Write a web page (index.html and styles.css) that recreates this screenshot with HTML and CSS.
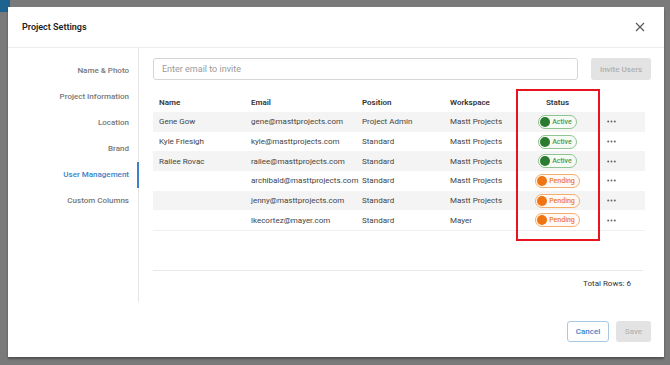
FILE: index.html
```html
<!DOCTYPE html>
<html lang="en">
<head>
    <meta charset="UTF-8">
    <meta name="viewport" content="width=device-width, initial-scale=1.0">
    <title>Project Settings</title>
    <link rel="stylesheet" href="styles.css">
</head>
<body>
    <div class="page-corner"></div>

    <div class="modal">
        <div class="modal-header">
            <h1>Project Settings</h1>
            <button class="close-btn" aria-label="Close">
                <svg width="10" height="10" viewBox="0 0 10 10">
                    <path d="M1 1 L9 9 M9 1 L1 9" stroke="#555" stroke-width="1.1" fill="none"/>
                </svg>
            </button>
        </div>

        <div class="modal-body">
            <nav class="side-nav">
                <div class="nav-item">Name &amp; Photo</div>
                <div class="nav-item">Project Information</div>
                <div class="nav-item">Location</div>
                <div class="nav-item">Brand</div>
                <div class="nav-item active">User Management</div>
                <div class="nav-item">Custom Columns</div>
            </nav>

            <section class="content">
                <div class="invite-row">
                    <input type="text" class="invite-input" placeholder="Enter email to invite">
                    <button class="invite-btn" disabled>Invite Users</button>
                </div>

                <div class="table-wrap">
                    <table class="users-table">
                        <thead>
                            <tr>
                                <th class="col-name">Name</th>
                                <th class="col-email">Email</th>
                                <th class="col-position">Position</th>
                                <th class="col-workspace">Workspace</th>
                                <th class="col-status">Status</th>
                                <th class="col-actions"></th>
                            </tr>
                        </thead>
                        <tbody id="user-rows"></tbody>
                    </table>
                    <div class="highlight-box"></div>
                </div>

                <div class="table-footer">Total Rows: 6</div>
            </section>
        </div>

        <div class="modal-footer">
            <button class="btn-cancel">Cancel</button>
            <button class="btn-save" disabled>Save</button>
        </div>
    </div>

    <script>
        // Table data
        const users = [
            { name: 'Gene Gow', email: 'gene@masttprojects.com', position: 'Project Admin', workspace: 'Mastt Projects', status: 'Active' },
            { name: 'Kyle Friesigh', email: 'kyle@masttprojects.com', position: 'Standard', workspace: 'Mastt Projects', status: 'Active' },
            { name: 'Railee Rovac', email: 'railee@masttprojects.com', position: 'Standard', workspace: 'Mastt Projects', status: 'Active' },
            { name: '', email: 'archibald@masttprojects.com', position: 'Standard', workspace: 'Mastt Projects', status: 'Pending' },
            { name: '', email: 'jenny@masttprojects.com', position: 'Standard', workspace: 'Mastt Projects', status: 'Pending' },
            { name: '', email: 'lkecortez@mayer.com', position: 'Standard', workspace: 'Mayer', status: 'Pending' }
        ];

        const tbody = document.getElementById('user-rows');
        const dots = '<svg width="9" height="3" viewBox="0 0 9 3"><circle cx="1.2" cy="1.5" r="1" fill="#666"/><circle cx="4.5" cy="1.5" r="1" fill="#666"/><circle cx="7.8" cy="1.5" r="1" fill="#666"/></svg>';

        users.forEach(u => {
            const tr = document.createElement('tr');
            const cls = u.status.toLowerCase();
            tr.innerHTML = `
                <td>${u.name}</td>
                <td>${u.email}</td>
                <td>${u.position}</td>
                <td>${u.workspace}</td>
                <td class="status-cell"><span class="badge ${cls}"><span class="dot"></span>${u.status}</span></td>
                <td class="actions-cell">${dots}</td>`;
            tbody.appendChild(tr);
        });
    </script>
</body>
</html>
```

FILE: styles.css
```css
* {
    box-sizing: border-box;
}

html, body {
    height: 100%;
    margin: 0;
    padding: 0;
    font-family: Roboto, 'Liberation Sans', sans-serif;
    background-color: #7a7a7a;
}

body {
    padding: 7px 6px 8px 8px;
    position: relative;
}

.page-corner {
    position: absolute;
    left: 0;
    top: 0;
    width: 10px;
    height: 12px;
    background-color: #1d6390;
}

.modal {
    position: relative;
    height: 350px;
    background-color: white;
    display: flex;
    flex-direction: column;
    box-shadow: 0 2px 2px rgba(0, 0, 0, 0.35);
}

.modal-header {
    height: 41px;
    padding: 0 14px;
    display: flex;
    align-items: center;
    justify-content: space-between;
    border-bottom: 1px solid #ececec;
}

.modal-header h1 {
    margin: 0;
    font-size: 9px;
    font-weight: 600;
    color: #222;
}

.close-btn {
    border: none;
    background: none;
    padding: 0;
    margin-right: 5px;
    display: flex;
    cursor: pointer;
}

.modal-body {
    display: flex;
    height: 254px;
}

.side-nav {
    width: 131px;
    padding-top: 10px;
    border-right: 1px solid #e6e6e6;
}

.nav-item {
    height: 26px;
    line-height: 26px;
    text-align: right;
    padding-right: 9px;
    font-size: 8px;
    font-weight: 500;
    color: #777;
}

.nav-item.active {
    color: #3d82c6;
    margin-right: -1px;
    border-right: 2px solid #3d82c6;
    padding-right: 8px;
}

.content {
    flex: 1;
    padding: 10px 13px 0 14px;
}

.invite-row {
    display: flex;
    gap: 13px;
}

.invite-input {
    flex: 1;
    height: 22px;
    padding: 0 8px;
    border: 1px solid #d6d6d6;
    border-radius: 3px;
    font-family: inherit;
    font-size: 9px;
    outline: none;
}

.invite-input::placeholder {
    color: #9a9a9a;
}

.invite-btn {
    width: 60px;
    height: 22px;
    border: none;
    border-radius: 3px;
    background-color: #e3e3e3;
    color: #b0b0b0;
    font-family: inherit;
    font-size: 8px;
    font-weight: 500;
}

.table-wrap {
    position: relative;
    margin-top: 13px;
    width: 492px;
}

.users-table {
    width: 100%;
    border-collapse: collapse;
    table-layout: fixed;
    font-size: 8px;
    color: #444;
}

.users-table th {
    height: 19px;
    text-align: left;
    padding: 0 6px;
    font-weight: 600;
    color: #333;
}

.users-table td {
    height: 19.7px;
    padding: 0 6px;
    white-space: nowrap;
}

.users-table tbody tr:nth-child(odd) {
    background-color: #f4f4f4;
}

.users-table tbody tr:last-child {
    border-bottom: 1px solid #f0f0f0;
}

.col-name { width: 92px; }
.col-email { width: 111px; }
.col-position { width: 88px; }
.col-workspace { width: 72px; }
.col-status { width: 83px; }
.col-actions { width: 46px; }

.users-table th.col-status,
.status-cell {
    text-align: center;
}

.actions-cell {
    padding-left: 8px !important;
}

.actions-cell svg {
    display: block;
}

.badge {
    display: inline-flex;
    align-items: center;
    gap: 2px;
    height: 14px;
    padding: 0 4px 0 1px;
    border-radius: 7px;
    font-size: 7px;
    font-weight: 500;
    vertical-align: middle;
}

.badge .dot {
    width: 10px;
    height: 10px;
    border-radius: 50%;
}

.badge.active {
    color: #4a9a4f;
    border: 1px solid #8fc493;
    background-color: #f6fbf6;
}

.badge.active .dot {
    background-color: #2b7a30;
}

.badge.pending {
    color: #ef7a1a;
    border: 1px solid #f4ae70;
    background-color: #fffaf5;
}

.badge.pending .dot {
    background-color: #f07412;
}

.highlight-box {
    position: absolute;
    left: 363px;
    top: -4px;
    width: 84px;
    height: 152px;
    border: 2px solid #e8131f;
}

.table-footer {
    margin-top: 39px;
    width: 490px;
    border-top: 1px solid #e8e8e8;
    padding: 8px 12px 0 0;
    text-align: right;
    font-size: 8px;
    color: #333;
}

.modal-footer {
    flex: 1;
    display: flex;
    justify-content: flex-end;
    align-items: center;
    gap: 7px;
    padding: 4px 13px 0 0;
}

.modal-footer button {
    height: 21px;
    border-radius: 3px;
    font-family: inherit;
    font-size: 8px;
    font-weight: 500;
}

.btn-cancel {
    width: 42px;
    background-color: white;
    border: 1px solid #a9c8e6;
    color: #3d82c6;
    cursor: pointer;
}

.btn-save {
    width: 35px;
    background-color: #e3e3e3;
    border: none;
    color: #b5b5b5;
}
```
